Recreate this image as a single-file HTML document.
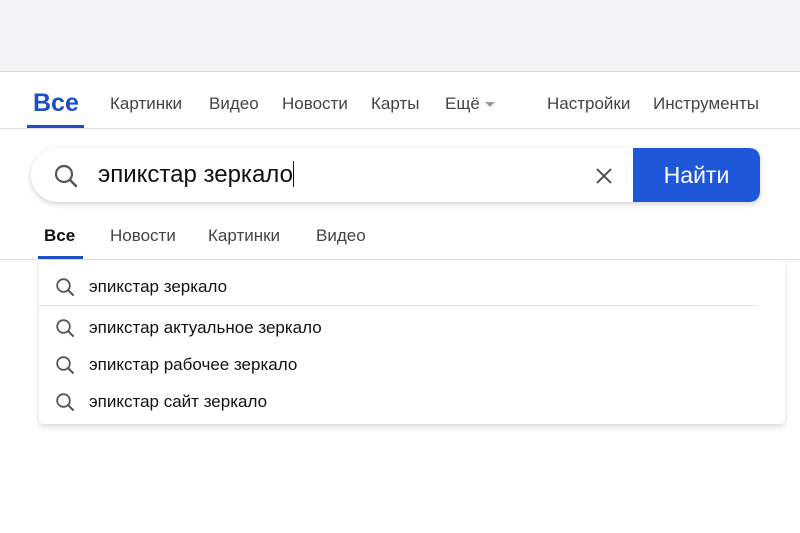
<!DOCTYPE html>
<html><head><meta charset="utf-8"><style>
*{margin:0;padding:0;box-sizing:border-box}
body{width:800px;height:533px;background:#fff;font-family:"Liberation Sans",sans-serif;position:relative;overflow:hidden;color:#333}
.top{position:absolute;left:0;top:0;width:800px;height:72px;background:#f3f3f5;border-bottom:1px solid #dcdcdf}
.t{position:absolute;white-space:nowrap}
.nav{font-size:17px;color:#444;top:94px}
.line{position:absolute;left:0;width:800px;height:1px;background:#dedfe2}
.search{position:absolute;left:31px;top:148px;width:729px;height:54px;border-radius:27px 10px 10px 27px;background:#fff;box-shadow:0 2px 6px rgba(0,0,0,.18);overflow:hidden}
.btn{position:absolute;right:0;top:0;width:127px;height:54px;background:#1f57d9;color:#fff;font-size:23px;text-align:center;line-height:54px;border-radius:0 10px 10px 0}
.drop{position:absolute;left:39px;top:260px;width:746px;height:164px;background:#fff;box-shadow:0 3px 6px rgba(0,0,0,.14);border-radius:0 0 4px 4px}
.it{position:absolute;left:50px;font-size:17px;color:#111}
.ic{position:absolute;left:16px}
</style></head><body>
<div class="top"></div>
<div class="t" style="left:33px;top:89px;font-size:25px;font-weight:bold;color:#1d4fc4">Все</div>
<div style="position:absolute;left:27px;top:125px;width:57px;height:4px;background:#1d4fc4"></div>
<div class="t nav" style="left:110px">Картинки</div>
<div class="t nav" style="left:209px">Видео</div>
<div class="t nav" style="left:282px">Новости</div>
<div class="t nav" style="left:371px">Карты</div>
<div class="t nav" style="left:445px">Ещё</div>
<div style="position:absolute;left:485px;top:102px;border-left:5px solid transparent;border-right:5px solid transparent;border-top:5px solid #999"></div>
<div class="t nav" style="left:547px">Настройки</div>
<div class="t nav" style="left:653px">Инструменты</div>
<div class="line" style="top:128px"></div>
<div class="search">
<svg style="position:absolute;left:22px;top:15px" width="26" height="26" viewBox="0 0 26 26"><circle cx="11" cy="11" r="8" fill="none" stroke="#555" stroke-width="2.2"/><line x1="17" y1="17" x2="23" y2="23" stroke="#555" stroke-width="2.4" stroke-linecap="round"/></svg>
<div class="t" style="left:67px;top:13px;font-size:24px;color:#111">эпикстар зеркало<span style="display:inline-block;width:1.5px;height:26px;background:#111;vertical-align:-5px"></span></div>
<svg style="position:absolute;left:564px;top:19px" width="18" height="18" viewBox="0 0 18 18"><path d="M2 2L16 16M16 2L2 16" stroke="#555" stroke-width="2"/></svg>
<div class="btn">Найти</div>
</div>
<div class="t" style="left:44px;top:226px;font-size:17px;font-weight:bold;color:#111">Все</div>
<div style="position:absolute;left:38px;top:256px;width:45px;height:3px;background:#1d4fc4"></div>
<div class="t nav" style="left:110px;top:226px">Новости</div>
<div class="t nav" style="left:208px;top:226px">Картинки</div>
<div class="t nav" style="left:316px;top:226px">Видео</div>
<div class="line" style="top:259px"></div>
<div class="drop">
<svg class="ic" style="top:17px" width="20" height="20" viewBox="0 0 20 20"><circle cx="8.5" cy="8.5" r="6.3" fill="none" stroke="#555" stroke-width="1.8"/><line x1="13" y1="13" x2="18" y2="18" stroke="#555" stroke-width="2" stroke-linecap="round"/></svg>
<div class="it" style="top:17px">эпикстар зеркало</div>
<div style="position:absolute;left:0;top:45px;width:719px;height:1px;background:#e4e4e6"></div>
<svg class="ic" style="top:58px" width="20" height="20" viewBox="0 0 20 20"><circle cx="8.5" cy="8.5" r="6.3" fill="none" stroke="#555" stroke-width="1.8"/><line x1="13" y1="13" x2="18" y2="18" stroke="#555" stroke-width="2" stroke-linecap="round"/></svg>
<div class="it" style="top:58px">эпикстар актуальное зеркало</div>
<svg class="ic" style="top:95px" width="20" height="20" viewBox="0 0 20 20"><circle cx="8.5" cy="8.5" r="6.3" fill="none" stroke="#555" stroke-width="1.8"/><line x1="13" y1="13" x2="18" y2="18" stroke="#555" stroke-width="2" stroke-linecap="round"/></svg>
<div class="it" style="top:95px">эпикстар рабочее зеркало</div>
<svg class="ic" style="top:132px" width="20" height="20" viewBox="0 0 20 20"><circle cx="8.5" cy="8.5" r="6.3" fill="none" stroke="#555" stroke-width="1.8"/><line x1="13" y1="13" x2="18" y2="18" stroke="#555" stroke-width="2" stroke-linecap="round"/></svg>
<div class="it" style="top:132px">эпикстар сайт зеркало</div>
</div>
</body></html>
